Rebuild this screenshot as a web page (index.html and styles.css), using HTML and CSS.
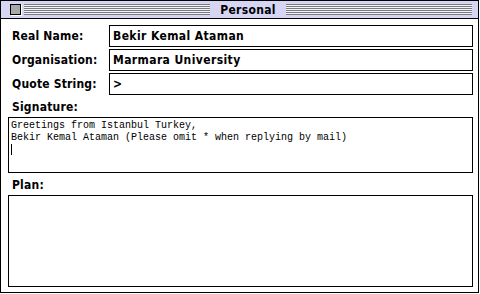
FILE: index.html
```html
<!DOCTYPE html>
<html lang="en">
<head>
    <meta charset="UTF-8">
    <meta name="viewport" content="width=device-width, initial-scale=1.0">
    <title>Personal</title>
    <link rel="stylesheet" href="styles.css">
</head>
<body>
    <div class="window">
        <div class="titlebar">
            <span class="close-box"></span>
            <span class="stripes"></span>
            <span class="title">Personal</span>
            <span class="stripes"></span>
        </div>
        <div class="content">
            <div class="field-row">
                <label class="label">Real Name:</label>
                <div class="field">Bekir Kemal Ataman</div>
            </div>
            <div class="field-row">
                <label class="label">Organisation:</label>
                <div class="field">Marmara University</div>
            </div>
            <div class="field-row">
                <label class="label">Quote String:</label>
                <div class="field">&gt;</div>
            </div>
            <div class="block-label">Signature:</div>
            <div class="textbox signature">Greetings from Istanbul Turkey,
Bekir Kemal Ataman (Please omit * when replying by mail)
<span class="caret"></span></div>
            <div class="block-label">Plan:</div>
            <div class="textbox plan"></div>
        </div>
    </div>
</body>
</html>
```

FILE: styles.css
```css
body {
    margin: 0;
    background-color: white;
    font-family: "DejaVu Sans Condensed", "DejaVu Sans", sans-serif;
    font-weight: bold;
    font-size: 12px;
    color: black;
}
.window {
    width: 477px;
    height: 291px;
    border: 1px solid black;
    display: flex;
    flex-direction: column;
}
.titlebar {
    height: 18px;
    box-sizing: border-box;
    border-bottom: 1px solid black;
    background-color: #d6d6f4;
    display: flex;
    align-items: center;
    padding: 0 6px 0 9px;
    gap: 2px;
}
.close-box {
    width: 9px;
    height: 9px;
    border: 1px solid black;
    background-color: #a8a8a8;
    box-shadow: 1px 1px 0 white;
    margin-right: 1px;
}
.stripes {
    flex: 1;
    height: 11px;
    background: repeating-linear-gradient(to bottom, #7a7a7a 0, #7a7a7a 1px, #f4f4ff 1px, #f4f4ff 2px);
}
.title {
    padding: 0 8px;
    line-height: 14px;
    letter-spacing: 0.3px;
}
.content {
    flex: 1;
    padding: 6px 5px 5px 7px;
    display: flex;
    flex-direction: column;
}
.field-row {
    display: flex;
    align-items: center;
    margin-bottom: 2px;
}
.field-row:nth-child(3) {
    margin-bottom: 0;
}
.label {
    width: 101px;
    padding-left: 4px;
    box-sizing: border-box;
    letter-spacing: 0.2px;
}
.field {
    flex: 1;
    height: 22px;
    box-sizing: border-box;
    border: 1px solid black;
    padding-left: 3px;
    line-height: 20px;
    letter-spacing: 0.4px;
}
.block-label {
    padding-left: 4px;
    margin-top: 5px;
    line-height: 14px;
    margin-bottom: 3px;
    letter-spacing: 0.2px;
}
.textbox {
    border: 1px solid black;
    box-sizing: border-box;
}
.signature {
    height: 56px;
    padding: 2px 2px;
    font-family: "Liberation Mono", monospace;
    font-weight: normal;
    font-size: 10px;
    line-height: 12px;
    white-space: pre;
}
.caret {
    display: inline-block;
    width: 1px;
    height: 11px;
    background-color: black;
    vertical-align: top;
}
.plan {
    flex: 1;
}
```
